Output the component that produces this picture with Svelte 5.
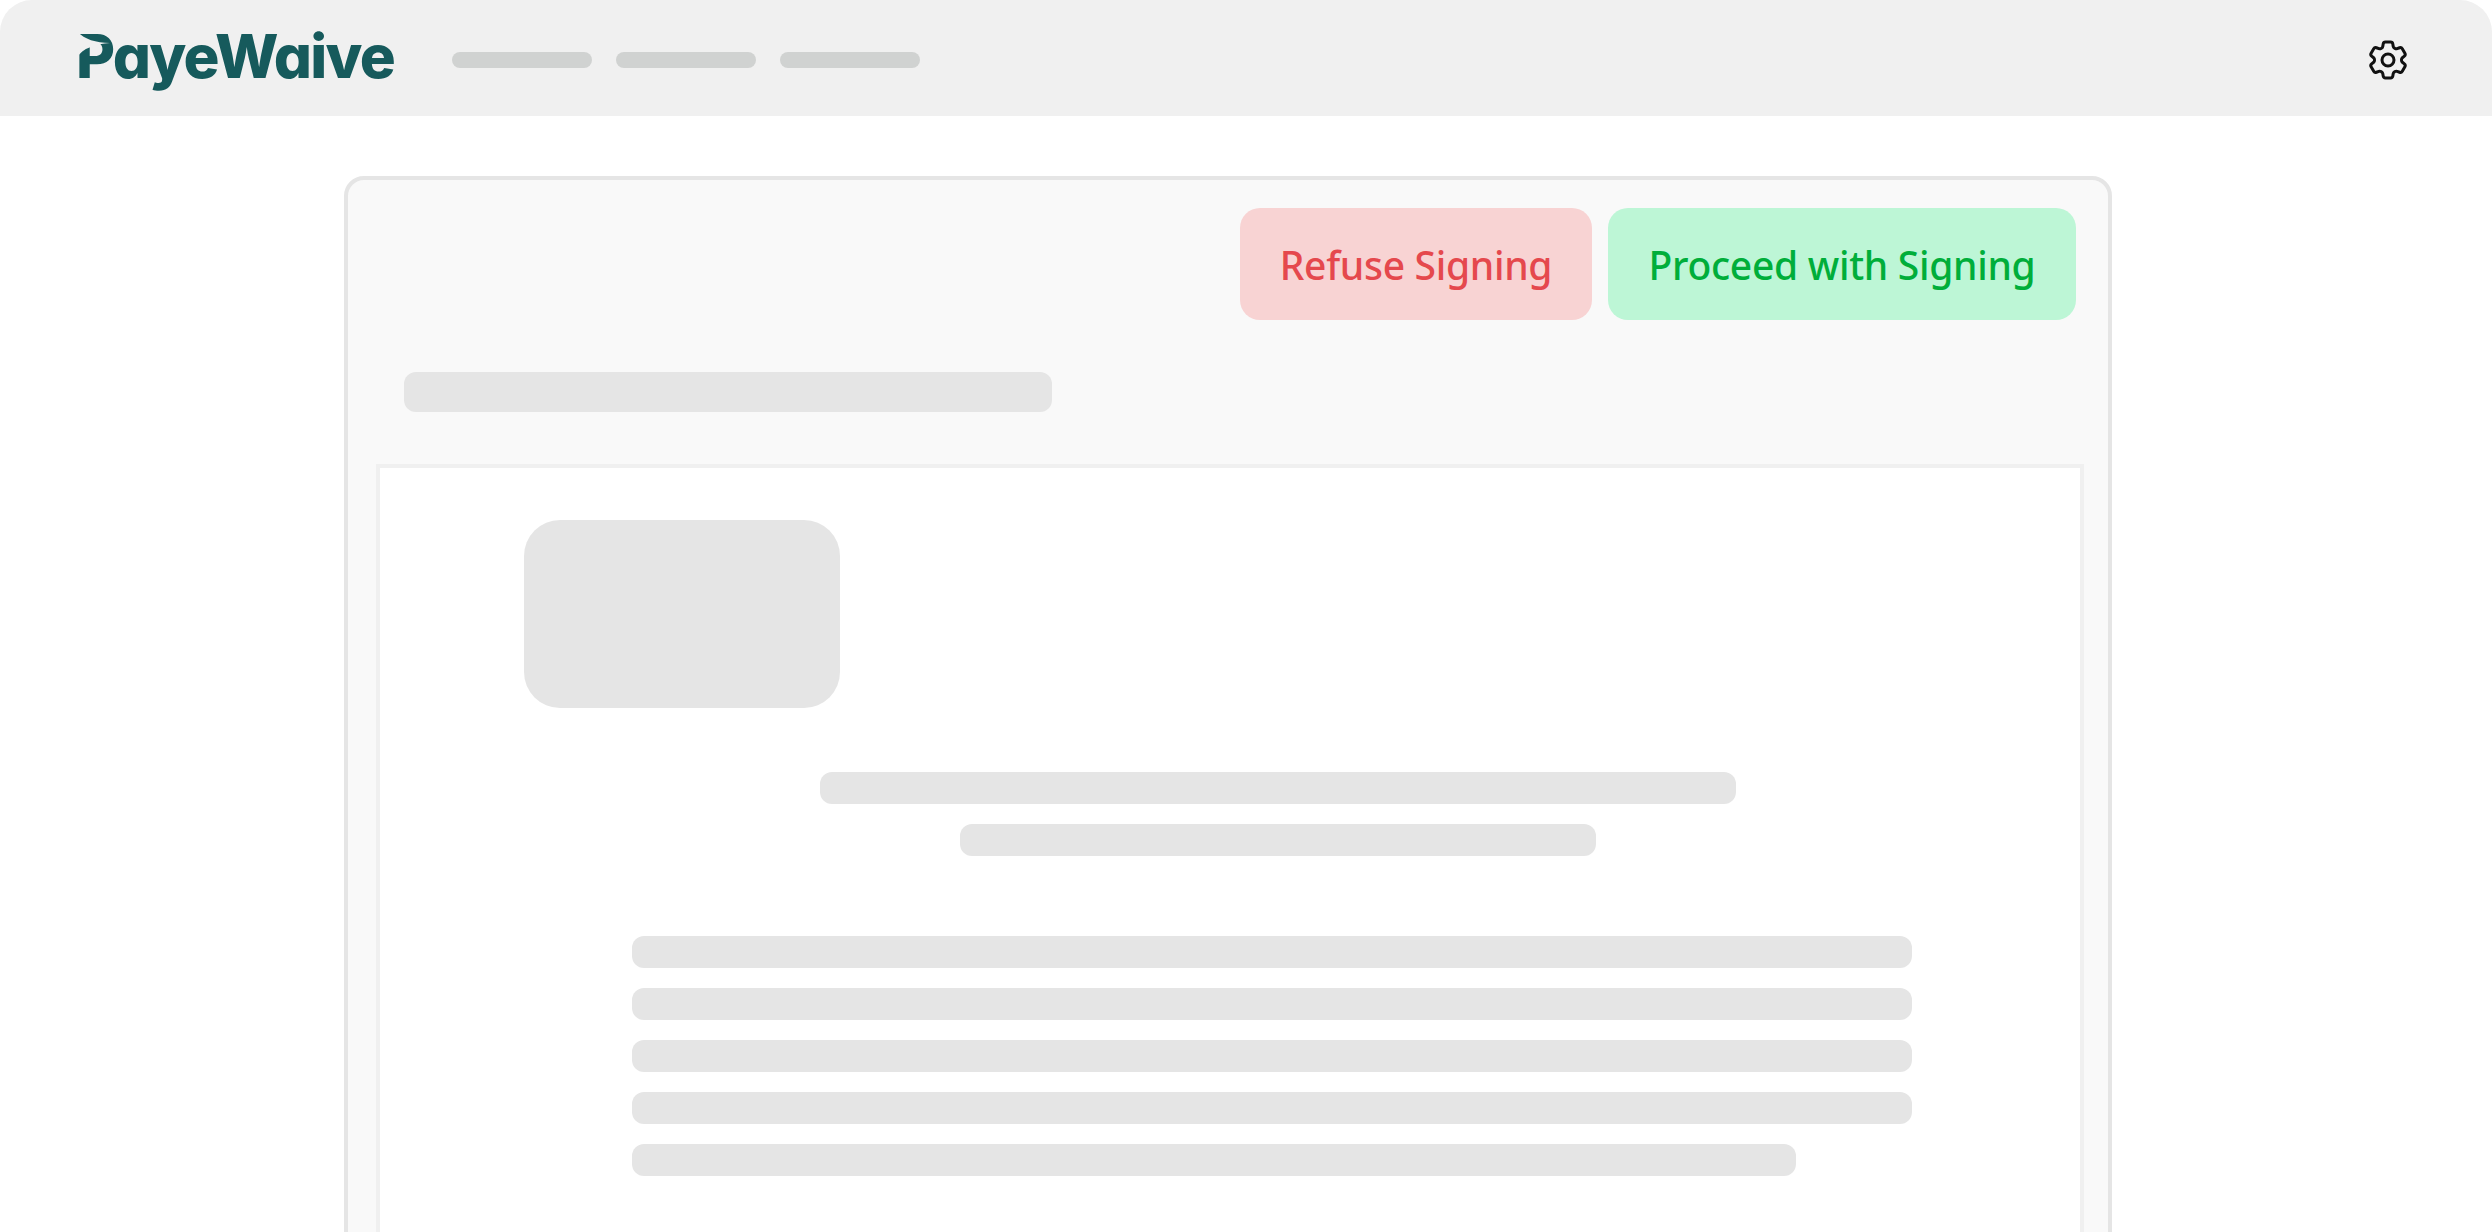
<script lang="ts">
	const navItems = [1, 2, 3];
	const paragraphLines = ['full', 'full', 'full', 'full', 'short'];
</script>

<div class="page">
	<header class="topbar">
		<div class="brand">
			PayeWaive
			<svg class="brand-cut" viewBox="0 0 40 44" aria-hidden="true">
				<path d="M-2 -1 L2 2 C8 9 20 13 34 13 C20 14 6 18 1 28 L-2 30 Z" fill="#f0f0f0" />
			</svg>
		</div>
		<nav class="nav">
			{#each navItems as item (item)}
				<span class="nav-item"></span>
			{/each}
		</nav>
		<svg class="gear" viewBox="0 0 24 24" fill="none" stroke="#111" stroke-width="1.5" stroke-linejoin="round">
			<path
				d="M9.594 3.94c.09-.542.56-.94 1.11-.94h2.593c.55 0 1.02.398 1.11.94l.213 1.281c.063.374.313.686.645.87.074.04.147.083.22.127.325.196.72.257 1.075.124l1.217-.456a1.125 1.125 0 0 1 1.37.49l1.296 2.247a1.125 1.125 0 0 1-.26 1.431l-1.003.827c-.293.241-.438.613-.43.992a7.723 7.723 0 0 1 0 .255c-.008.378.137.75.43.991l1.004.827c.424.35.534.955.26 1.43l-1.298 2.247a1.125 1.125 0 0 1-1.369.491l-1.217-.456c-.355-.133-.75-.072-1.076.124a6.47 6.47 0 0 1-.22.128c-.331.183-.581.495-.644.869l-.213 1.281c-.09.543-.56.94-1.11.94h-2.594c-.55 0-1.019-.398-1.11-.94l-.213-1.281c-.062-.374-.312-.686-.644-.87a6.52 6.52 0 0 1-.22-.127c-.325-.196-.72-.257-1.076-.124l-1.217.456a1.125 1.125 0 0 1-1.369-.49l-1.297-2.247a1.125 1.125 0 0 1 .26-1.431l1.004-.827c.292-.24.437-.613.43-.991a6.932 6.932 0 0 1 0-.255c.007-.38-.138-.751-.43-.992l-1.004-.827a1.125 1.125 0 0 1-.26-1.43l1.297-2.247a1.125 1.125 0 0 1 1.37-.491l1.216.456c.356.133.751.072 1.076-.124.072-.044.146-.086.22-.128.332-.183.582-.495.644-.869l.214-1.28Z"
			/>
			<circle cx="12" cy="12" r="3" />
		</svg>
	</header>

	<main class="card">
		<div class="actions">
			<button class="btn refuse">Refuse Signing</button>
			<button class="btn proceed">Proceed with Signing</button>
		</div>

		<div class="title-bar"></div>

		<section class="doc">
			<div class="doc-logo"></div>
			<div class="doc-heading">
				<span class="line"></span>
				<span class="line sub"></span>
			</div>
			<div class="doc-text">
				{#each paragraphLines as kind, i (i)}
					<span class="line" class:short={kind === 'short'}></span>
				{/each}
			</div>
		</section>
	</main>
</div>

<style>
	:global(body) {
		margin: 0;
		background: #fff;
		overflow: hidden;
	}

	.page {
		height: 1232px;
		overflow: hidden;
	}

	.topbar {
		display: flex;
		align-items: center;
		height: 116px;
		padding: 4px 80px 0;
		background: #f0f0f0;
		border-radius: 32px 32px 0 0;
		box-sizing: border-box;
	}

	.brand {
		position: relative;
		width: 320px;
		margin: -8px 0 0 -4px;
		font-family: Inter, 'Liberation Sans', sans-serif;
		font-feature-settings: 'cv11' 1;
		font-size: 60px;
		font-weight: 800;
		line-height: 60px;
		letter-spacing: -1.75px;
		color: #165a5c;
		white-space: nowrap;
	}

	.brand-cut {
		position: absolute;
		left: 0;
		top: 4px;
		width: 40px;
		height: 44px;
		overflow: visible;
	}

	.nav {
		display: flex;
		gap: 24px;
		margin-left: 56px;
	}

	.nav-item {
		width: 140px;
		height: 16px;
		border-radius: 8px;
		background: #d0d2d1;
	}

	.gear {
		width: 48px;
		height: 48px;
		margin-left: auto;
	}

	.card {
		width: 1768px;
		height: 1300px;
		margin: 60px 0 0 344px;
		background: #f9f9f9;
		border: 4px solid #e5e5e5;
		border-radius: 20px;
		box-sizing: border-box;
	}

	.actions {
		display: flex;
		justify-content: flex-end;
		gap: 16px;
		padding: 28px 32px 0 0;
	}

	.btn {
		display: flex;
		align-items: center;
		justify-content: center;
		height: 112px;
		border: 0;
		border-radius: 20px;
		font-family: 'Noto Sans', sans-serif;
		font-size: 39px;
		font-weight: 500;
		letter-spacing: -0.3px;
	}

	.refuse {
		width: 352px;
		background: #f8d3d3;
		color: #e5484d;
	}

	.proceed {
		width: 468px;
		background: #bdf6d6;
		color: #00ae3a;
	}

	.title-bar {
		width: 648px;
		height: 40px;
		margin: 52px 0 0 56px;
		border-radius: 12px;
		background: #e5e5e5;
	}

	.doc {
		height: 1000px;
		margin: 52px 24px 0 28px;
		padding-top: 52px;
		background: #fff;
		border: 4px solid #f0f0f0;
		box-sizing: border-box;
	}

	.doc-logo {
		width: 316px;
		height: 188px;
		margin-left: 144px;
		border-radius: 36px;
		background: #e5e5e5;
	}

	.doc-heading {
		display: flex;
		flex-direction: column;
		align-items: center;
		gap: 20px;
		width: 916px;
		margin: 64px 0 0 440px;
	}

	.doc-text {
		display: flex;
		flex-direction: column;
		gap: 20px;
		width: 1280px;
		margin: 80px 0 0 252px;
	}

	.line {
		display: block;
		width: 100%;
		height: 32px;
		border-radius: 12px;
		background: #e5e5e5;
	}

	.line.sub {
		width: 636px;
	}

	.line.short {
		width: 1164px;
	}
</style>
